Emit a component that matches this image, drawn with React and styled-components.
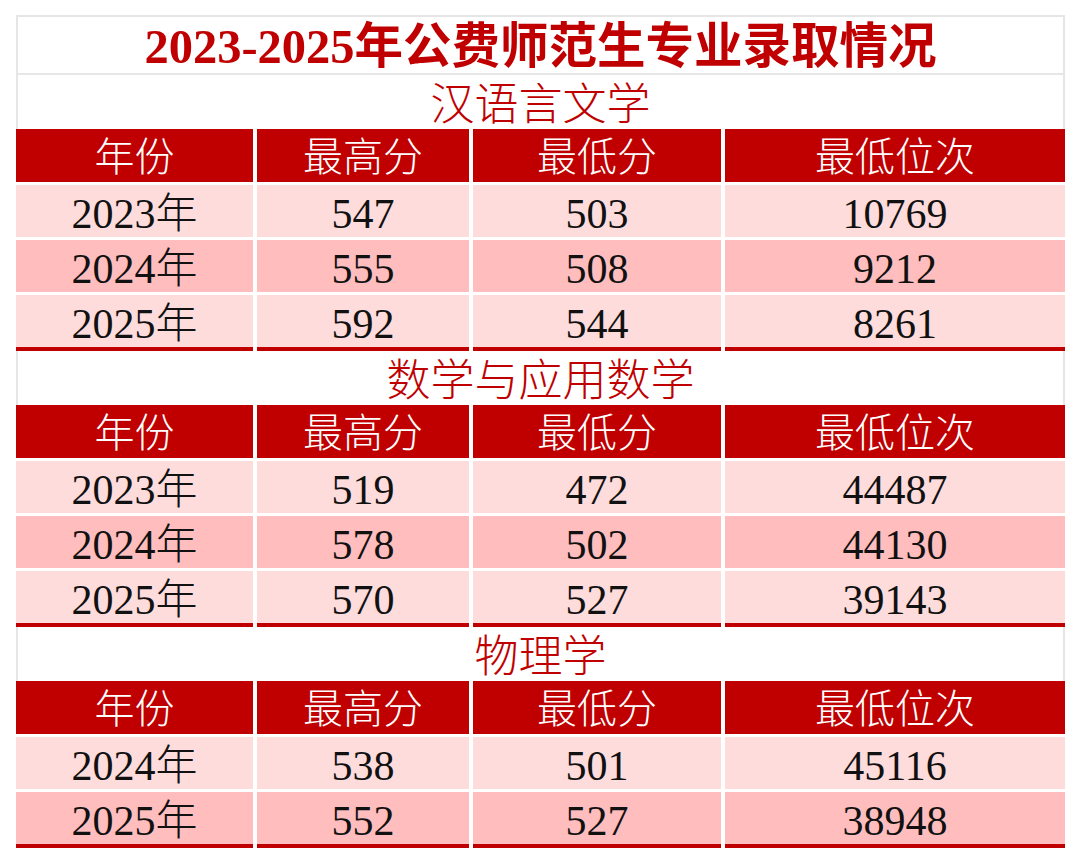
import styled, { createGlobalStyle } from "styled-components";

const GlobalStyle = createGlobalStyle`
  html, body {
    margin: 0;
    padding: 0;
    background: #ffffff;
  }
  * {
    box-sizing: border-box;
  }
`;

const RED = "#c00000";
const COLS = "237px 212px 248px 1fr";

const Page = styled.div`
  padding: 15px 15px 0 16px;
  font-family: "Liberation Serif", "Noto Sans CJK SC", serif;
`;

const Table = styled.div`
  width: 1049px;
  display: flex;
  flex-direction: column;
`;

const Title = styled.div`
  height: 60px;
  border: 2px solid #e6e6e6;
  display: flex;
  align-items: center;
  justify-content: center;
  color: ${RED};
  font-size: 48.5px;
  font-weight: bold;
  line-height: 1;
  padding-top: 4px;
`;

const Section = styled.div`
  display: flex;
  flex-direction: column;
`;

const SubTitle = styled.div`
  height: 54px;
  border-left: 2px solid #e6e6e6;
  border-right: 2px solid #e6e6e6;
  display: flex;
  align-items: center;
  justify-content: center;
  color: ${RED};
  font-size: 44px;
  font-weight: 300;
  line-height: 1;
  padding-top: 7px;
`;

const Row = styled.div`
  display: grid;
  grid-template-columns: ${COLS};
  column-gap: 4px;
  height: ${(p) => (p.$head ? 53 : p.$last ? 56 : 52)}px;
  margin-bottom: ${(p) => (p.$last ? 0 : 3)}px;
`;

const HeadCell = styled.div`
  background: ${RED};
  color: #ffffff;
  font-size: 40px;
  font-weight: 300;
  display: flex;
  align-items: center;
  justify-content: center;
  line-height: 1;
  padding-top: 5px;
`;

const Cell = styled.div`
  background: ${(p) => (p.$dark ? "#ffbdbd" : "#ffdcdc")};
  color: #111111;
  font-size: 42px;
  font-weight: 300;
  display: flex;
  align-items: center;
  justify-content: center;
  line-height: 1;
  padding-top: 6px;
  border-bottom: ${(p) => (p.$last ? `4px solid ${RED}` : "none")};
`;

const heads = ["年份", "最高分", "最低分", "最低位次"];

const sections = [
  {
    name: "汉语言文学",
    rows: [
      ["2023年", 547, 503, 10769],
      ["2024年", 555, 508, 9212],
      ["2025年", 592, 544, 8261],
    ],
  },
  {
    name: "数学与应用数学",
    rows: [
      ["2023年", 519, 472, 44487],
      ["2024年", 578, 502, 44130],
      ["2025年", 570, 527, 39143],
    ],
  },
  {
    name: "物理学",
    rows: [
      ["2024年", 538, 501, 45116],
      ["2025年", 552, 527, 38948],
    ],
  },
];

function ScoreSection({ section }) {
  return (
    <Section>
      <SubTitle>{section.name}</SubTitle>
      <Row $head>
        {heads.map((h) => (
          <HeadCell key={h}>{h}</HeadCell>
        ))}
      </Row>
      {section.rows.map((r, i) => {
        const last = i === section.rows.length - 1;
        return (
          <Row key={r[0]} $last={last}>
            {r.map((v, j) => (
              <Cell key={j} $dark={i % 2 === 1} $last={last}>
                {v}
              </Cell>
            ))}
          </Row>
        );
      })}
    </Section>
  );
}

export default function App() {
  return (
    <Page>
      <GlobalStyle />
      <Table>
        <Title>2023-2025年公费师范生专业录取情况</Title>
        {sections.map((s) => (
          <ScoreSection key={s.name} section={s} />
        ))}
      </Table>
    </Page>
  );
}
